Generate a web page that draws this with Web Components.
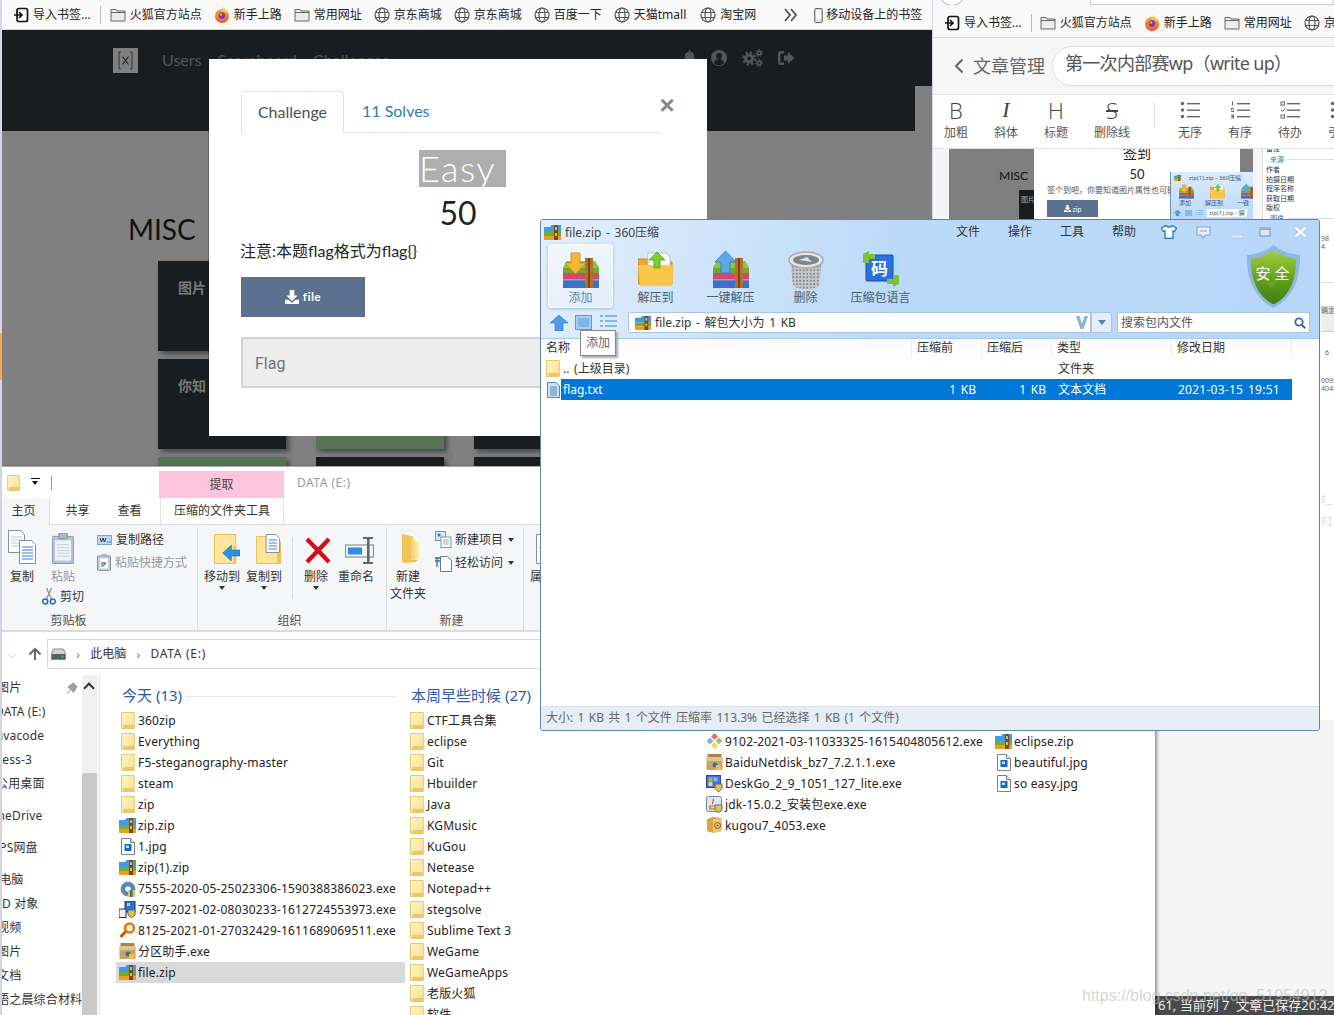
<!DOCTYPE html>
<html lang="zh">
<head>
<meta charset="utf-8">
<title>screenshot</title>
<style>
  html, body { margin: 0; padding: 0; }
  body {
    width: 1334px;
    height: 1015px;
    overflow: hidden;
    position: relative;
    background: #d9d4e6;
    font: 12px/16px "Noto Sans", "Noto Sans CJK SC", sans-serif;
    color: #222;
  }
  .orange { position: absolute; left: 0; top: 333px; width: 2px; height: 47px; background: #f7a65f; }
</style>
</head>
<body>
<div class="orange"></div>
<ctf-browser></ctf-browser>
<editor-window></editor-window>
<explorer-window></explorer-window>
<zip-window></zip-window>
<desk-mark></desk-mark>

<script>
const rarBooks = `<rect y="28" width="36" height="9" fill="#3f6fc7"/><rect y="28" width="36" height="1.5" fill="#7fa4e8"/><rect y="22" width="36" height="6" fill="#d8476a"/><path d="M4 10h28l4 7v5H0v-5z" fill="#6faa32"/><path d="M4 10h28l4 7H0z" fill="#8cc63f"/><rect x="22" y="7" width="8" height="30" fill="#b5702a"/><rect x="25" y="7" width="2" height="30" fill="#7c4514"/>`

const ICONS = {
  import: ['0 0 16 16', `<rect x="4" y="1.5" width="10.5" height="13" rx="2" fill="#fff" stroke="#111" stroke-width="1.7"/><path d="M1 8h7.5M6 5l3 3-3 3" fill="none" stroke="#111" stroke-width="1.7"/>`],
  bmfolder: ['0 0 16 16', `<path d="M1 2.5h5l1 1.5h8v10H1z" fill="#ececec" stroke="#666"/><path d="M1 5.5h14" stroke="#666"/>`],
  firefox: ['0 0 16 16', `<defs><radialGradient id="g" cx=".5" cy=".25" r=".85"><stop offset="0" stop-color="#ffc02e"/><stop offset=".6" stop-color="#ff7a1a"/><stop offset="1" stop-color="#e8245a"/></radialGradient></defs><circle cx="8" cy="9" r="7" fill="url(#g)"/><path d="M9 0c2 2 4 3 4.500 6L8 5z" fill="#ffcf3a"/><circle cx="8" cy="8.500" r="3.400" fill="#6b3fc8"/><circle cx="7" cy="7.500" r="1.300" fill="#f5a33a"/>`],
  globe: ['0 0 16 16', `<g fill="none" stroke="#555" stroke-width="1.2"><circle cx="8" cy="8" r="7"/><ellipse cx="8" cy="8" rx="3" ry="7"/><path d="M1.500 5.500h13M1.500 10.500h13"/></g>`],
  phone: ['0 0 9 15', `<rect x=".7" y=".5" width="7.600" height="14" rx="1.200" fill="#ddd" stroke="#666"/><rect x="2" y="2.500" width="5" height="9" fill="#fff"/>`],
  chevrons: ['0 0 14 14', `<path d="M1 1l5 6-5 6M7 1l5 6-5 6" fill="none" stroke="#555" stroke-width="1.800"/>`],
  logo: ['0 0 25 25', `<rect width="25" height="25" fill="#808080"/><path d="M8 4H6v17h2M17 4h2v17h-2" fill="none" stroke="#333"/><path d="M9.500 8.500l6 8M15.500 8.500l-6 8" stroke="#222" stroke-width="1.200"/>`],
  bell: ['0 0 14 16', `<path d="M7 0a1 1 0 011 1v1a4.500 4.500 0 014 4.500c0 3.500 1 4.500 2 5.500H0c1-1 2-2 2-5.500A4.500 4.500 0 016 2V1a1 1 0 011-1z" fill="#555"/><path d="M5 13.500h4a2 2 0 01-4 0z" fill="#555"/>`],
  usercircle: ['0 0 16 16', `<circle cx="8" cy="8" r="8" fill="#555"/><circle cx="8" cy="6" r="3" fill="#1a1d20"/><path d="M2.800 13c1-3 3-4 5.200-4s4.200 1 5.200 4a7 7 0 01-10.400 0z" fill="#1a1d20"/>`],
  cogs: ['0 0 22 18', `<g fill="none" stroke="#555"><circle cx="7.500" cy="9.500" r="3.500" stroke-width="3"/><circle cx="7.500" cy="9.500" r="6" stroke-width="2.400" stroke-dasharray="2.400 2.300"/><circle cx="18" cy="4" r="1.800" stroke-width="1.600"/><circle cx="18" cy="4" r="3.200" stroke-width="1.400" stroke-dasharray="1.500 1.300"/><circle cx="18" cy="14" r="1.800" stroke-width="1.600"/><circle cx="18" cy="14" r="3.200" stroke-width="1.400" stroke-dasharray="1.500 1.300"/></g>`],
  signout: ['0 0 17 14', `<path d="M6 1.200H2.500A1.300 1.300 0 001.200 2.500v9a1.300 1.300 0 001.300 1.300H6" fill="none" stroke="#555" stroke-width="2.400"/><path d="M6 4.500h4V1l6.500 6-6.500 6V9.500H6z" fill="#555"/>`],
  download: ['0 0 15 15', `<path d="M5 0h5v6h3.500L7.500 12 1.500 6H5z" fill="#fff"/><path d="M0 10.500h3.500l4 3.200 4-3.200H15V15H0z" fill="#fff"/>`],
  back: ['0 0 10 16', `<path d="M8.500 1.500L2 8l6.500 6.500" fill="none" stroke="#666" stroke-width="2"/>`],
  ul: ['0 0 20 18', `<g fill="#666"><circle cx="2.500" cy="2.500" r="1.700"/><circle cx="2.500" cy="9" r="1.700"/><circle cx="2.500" cy="15.500" r="1.700"/><rect x="7" y="2" width="13" height="1.400"/><rect x="7" y="8.500" width="13" height="1.400"/><rect x="7" y="15" width="13" height="1.400"/></g>`],
  ol: ['0 0 20 18', `<g fill="#666"><rect x="7" y="2" width="13" height="1.400"/><rect x="7" y="8.500" width="13" height="1.400"/><rect x="7" y="15" width="13" height="1.400"/><path d="M2 .5h1v4H2zM1 7h3v1H2v1h2v2H1v-1h2V9H1zM1 13.500h3v4H1v-1h2v-.5H1.500v-1H3V14.500H1z"/></g>`],
  todo: ['0 0 20 18', `<g fill="#666"><rect x="7" y="2" width="13" height="1.400"/><rect x="7" y="8.500" width="13" height="1.400"/><rect x="7" y="15" width="13" height="1.400"/></g><g fill="none" stroke="#666"><rect x="1" y="1" width="3.500" height="3"/><rect x="1" y="14" width="3.500" height="3"/><path d="M1 9l1.500 1.500 2.500-3"/></g>`],

  // file list
  folder: ['0 0 14 17', `<defs><linearGradient id="g" x1="0" y1="0" x2="1" y2="1"><stop offset="0" stop-color="#fff4c8"/><stop offset="1" stop-color="#fbe08c"/></linearGradient></defs><path d="M.5.5h12.800v13H3v3H.5z" fill="url(#g)" stroke="#e6c873"/><path d="M3 13.500v3h10.300v-3z" fill="#f0c95e" stroke="#e6c873"/>`],
  zip: ['0 0 17 15', `<path d="M0 2h6l1.500-2H17v7H0z" fill="#3f9be8"/><rect y="7" width="17" height="4" fill="#6fb02e"/><rect y="11" width="17" height="4" fill="#f39a1f"/><rect x="10" width="4" height="15" fill="#7c4a16"/><rect x="11" y="2" width="2" height="3" fill="#e8b45a"/><rect x="11" y="8" width="2" height="3" fill="#e8b45a"/>`],
  jpg: ['0 0 14 17', `<path d="M.5.500h9l4 4v12H.5z" fill="#fff" stroke="#77818c"/><path d="M9.500.500v4h4" fill="#eef" stroke="#77818c"/><rect x="3.500" y="6" width="7" height="7" fill="#1469c0"/><rect x="5" y="7.500" width="3" height="2.500" fill="#bfe3ff"/>`],
  txt: ['0 0 13 16', `<path d="M.5.5h8.500l3.500 3.500v11.500H.5z" fill="#cfe2f6" stroke="#4f86c0"/><path d="M3 5h7M3 7h7M3 9h7M3 11h7M3 13h7" stroke="#4f86c0"/>`],
  e7555: ['0 0 16 16', `<circle cx="8" cy="8" r="7.500" fill="#8b8b8b"/><circle cx="8" cy="8" r="5.500" fill="#2a8bd8"/><circle cx="8" cy="8" r="2.800" fill="#fff"/><rect x="8" y="9" width="7" height="7" rx="1" fill="#f2c22c"/><rect x="10" y="9" width="2.500" height="7" fill="#1f6fcf"/>`],
  e7597: ['0 0 17 17', `<rect x="6" y="0" width="10" height="11" fill="#2f6fd0" stroke="#234"/><rect x="8" y="2" width="3" height="3" fill="#9fd0ff"/><rect x="0" y="8" width="7" height="8.500" fill="#eee" stroke="#333"/><path d="M9 9h7v5l-3.500 3L9 14z" fill="#f2c22c" stroke="#2f6fd0"/>`],
  e8125: ['0 0 17 17', `<circle cx="10.500" cy="6" r="4.500" fill="#fff4e0" stroke="#e87511" stroke-width="2.600"/><path d="M6.800 9.500L1.500 15" stroke="#c85a08" stroke-width="3.200"/>`],
  boxe: ['0 0 17 17', `<rect x=".5" y="3" width="16" height="13" rx="1" fill="#c8a468"/><rect x=".5" y="3" width="16" height="4" fill="#e2c48e"/><rect x="1.500" y="0" width="14" height="3" fill="#a88650"/><circle cx="9" cy="11" r="2.500" fill="#2d6fb8"/><rect x="10" y="11" width="5" height="5" fill="#f2c22c"/>`],
  git: ['0 0 17 17', `<path d="M8.500 0l3.500 3.500-3.500 3.500L5 3.500z" fill="#ef6a6a"/><path d="M4 4.500L7.500 8 4 11.500.5 8z" fill="#7cb4ef"/><path d="M13 4.500L16.500 8 13 11.500 9.500 8z" fill="#8ed06f"/><path d="M8.500 9l3.500 3.500L8.500 16 5 12.500z" fill="#f6d65a"/>`],
  desk: ['0 0 17 17', `<rect x=".5" y=".5" width="14" height="12" fill="#4c6fd8" stroke="#2a46a0"/><rect x="2.500" y="2.500" width="4" height="4" fill="#7fd05a"/><rect x="7.500" y="2.500" width="4" height="4" fill="#7fb8ff"/><rect x="2.500" y="7" width="4" height="4" fill="#ffd24a"/><path d="M9 9h7v4.500L12.500 17 9 13.500z" fill="#f2c22c" stroke="#2f6fd0"/>`],
  jdk: ['0 0 17 17', `<rect x=".5" y=".5" width="15" height="15" rx="2" fill="#dfe6f0" stroke="#77818c"/><path d="M7 3c2 2-2 3 0 5M4 10h6v3H4z" fill="none" stroke="#d0541a" stroke-width="1.200"/><path d="M9 9h7v4.500L12.500 17 9 13.500z" fill="#f2c22c" stroke="#2f6fd0"/>`],
  kugou: ['0 0 17 17', `<path d="M1 2l6-2 9 1v13l-9 2-6-2z" fill="#d9a53f"/><path d="M7 2l9-1v13l-9 2z" fill="#e9c778"/><circle cx="11.500" cy="8.500" r="3" fill="none" stroke="#8b5a10"/><circle cx="11.500" cy="8.500" r="1" fill="#8b5a10"/>`],

  // ribbon
  copy: ['0 0 28 34', `<path d="M.5.500h12l4 4v18H.5z" fill="#fff" stroke="#8a8f96"/><path d="M3 7h11M3 10h11M3 13h11M3 16h11" stroke="#b8c8dc"/><path d="M11.500 10.500h12l4 4v19h-16z" fill="#fff" stroke="#8a8f96"/><path d="M14 17h11M14 20h11M14 23h11M14 26h11M14 29h11" stroke="#3d7fd0"/>`],
  paste: ['0 0 26 32', `<rect x=".5" y="3.500" width="25" height="28" rx="1" fill="#b6c4d8" stroke="#8492a8"/><rect x="3.500" y="7.500" width="19" height="21" fill="#eef2f8"/><path d="M6 12h14M6 15h14M6 18h14M6 21h14M6 24h14" stroke="#c4d0e0"/><rect x="8" y="0" width="10" height="6" rx="1" fill="#aeb8c6" stroke="#7d8797"/>`],
  copypath: ['0 0 15 10', `<rect x=".5" y=".5" width="14" height="9" fill="#bcd8f4" stroke="#7ca4cc"/><path d="M3 3l1.500 4L6 3l1.500 4L9 3M10.500 7h1M12.500 7h1" fill="none" stroke="#223" stroke-width=".9"/>`],
  pastelink: ['0 0 14 17', `<rect x=".5" y="2" width="13" height="14.500" rx="1" fill="#c2cede" stroke="#8492a8"/><rect x="3" y="4.500" width="8" height="10" fill="#fff"/><rect x="4" y="0" width="6" height="3" fill="#aeb8c6"/><path d="M5 13V9h4M9 9L6 12" fill="none" stroke="#6a7a92" stroke-width="1.300"/>`],
  scissors: ['0 0 14 17', `<path d="M9.500 0L4.500 11M4.500 0l5 11" stroke="#8b9096" stroke-width="1.300"/><g fill="none" stroke="#1b6fc4" stroke-width="1.500"><circle cx="3.200" cy="13.500" r="2.500"/><circle cx="10.800" cy="13.500" r="2.500"/></g>`],
  moveto: ['0 0 27 30', `<rect x=".5" y=".5" width="22" height="29" fill="#fde59b" stroke="#e8c255"/><rect x="20" y="12" width="3" height="17" fill="#f0c44f"/><path d="M9 19l9-8v5h9v6h-9v5z" fill="#2f8fe0" stroke="#1c6fc0" stroke-width=".6"/>`],
  copyto: ['0 0 27 30', `<path d="M.5 2.500h17V8h8v21.500H.5z" fill="#fde59b" stroke="#e8c255"/><rect x="22" y="12" width="3.500" height="17" fill="#f0c44f"/><path d="M10.500.500h10l4 4v14h-14z" fill="#fff" stroke="#8a8f96"/><path d="M13 6h9M13 9h9M13 12h9M13 15h9" stroke="#3d7fd0"/>`],
  del: ['0 0 26 27', `<path d="M2 2l22 23M24 2L2 25" stroke="#d80a14" stroke-width="4.200"/>`],
  rename: ['0 0 29 27', `<rect x=".5" y="8" width="28" height="12" fill="#f4f6f9" stroke="#8b8f96" stroke-width="1.200"/><rect x="3" y="10.500" width="14" height="7" fill="#2a8fe6"/><rect x="22" y="2" width="2.600" height="23" fill="#666"/><path d="M18 1h10M18 26h10" stroke="#666" stroke-width="2"/>`],
  newfolder: ['0 0 18 30', `<defs><linearGradient id="g" x1="0" y1="0" x2="1" y2="0"><stop offset="0" stop-color="#f3cf6e"/><stop offset="1" stop-color="#fdeeb4"/></linearGradient></defs><path d="M0 0l9 2v24l-9 3z" fill="#f0c455"/><path d="M9 2h2l1 4 5 2v17l-8 1z" fill="url(#g)"/><path d="M0 27l8-1h8l1-1-4 3-9 1z" fill="#ecc053"/>`],
  newitem: ['0 0 17 17', `<rect x=".5" y=".5" width="10" height="9" fill="#dbe8f8" stroke="#8090a8"/><rect x="2.500" y="2.500" width="3" height="3" fill="#3d7fd0"/><rect x="6" y="6" width="10" height="10.500" fill="#fff" stroke="#8090a8"/><path d="M8 9h6M8 11h6M8 13h6" stroke="#aaa"/>`],
  easy: ['0 0 17 19', `<path d="M5.500 3.500h7l4 4v11h-11z" fill="#fff" stroke="#778"/><path d="M0 5h6M0 8h5M2 5v9" stroke="#1b6fc4" stroke-width="1.300"/>`],
  prop: ['0 0 12 30', `<path d="M.5.500H12v29H.5z" fill="#fff" stroke="#8a8f96"/><path d="M3 14h7M3 18h7" stroke="#e89040"/>`],
  drive: ['0 0 15 12', `<path d="M2.500 1h10l2 4.500v6H.5v-6z" fill="#cfd2d6" stroke="#888"/><rect x="1" y="6" width="13" height="5" fill="#5a5d61"/><circle cx="11.500" cy="8.500" r="1" fill="#44d04a"/>`],
  pin: ['0 0 12 12', `<path d="M7 0l5 5-1.500.800-1 2.700L7 11 5 8 1 12 .5 11.500l3.500-4L1.500 5l2.500-2.500 2.300-1z" fill="#9aa0a6"/>`],
  up: ['0 0 14 14', `<path d="M7 13V2M1.500 7.500L7 2l5.500 5.500" fill="none" stroke="#666" stroke-width="2"/>`],

  // 360 zip window
  zadd: ['0 0 36 38', rarBooks + `<path d="M8 2h9v10h6L12.500 23 2 12h6z" fill="#f7b733" stroke="#c98a12" stroke-width=".8"/>`],
  zone: ['0 0 36 38', rarBooks + `<path d="M8 22V11H2L12.500 0 23 11h-6v11z" fill="#5da8ec" stroke="#2c78c4" stroke-width=".8"/>`],
  zext: ['0 0 36 36', `<path d="M0 8h10l2 3h22v22H0z" fill="#e8a92c" stroke="#c98a12"/><path d="M10 2h18l4 4v12H10z" fill="#fff" stroke="#bbb"/><path d="M0 14h34l2 2-2 19H2z" fill="#fbc74a"/><path d="M16 17V9h-5l8-8 8 8h-5v8z" fill="#7fcf2e" stroke="#4c9a12" stroke-width=".8"/>`],
  ztrash: ['0 0 36 38', `<defs><pattern id="m" width="3.500" height="3.500" patternUnits="userSpaceOnUse"><rect width="3.500" height="3.500" fill="#c4c6c8"/><rect x="1" y="1" width="1.500" height="1.500" fill="#6c7072"/></pattern></defs><path d="M2 9l3 26c5 4 21 4 26 0l3-26z" fill="url(#m)"/><ellipse cx="18" cy="9" rx="17" ry="8" fill="#e4e6e8" stroke="#a4a8aa" stroke-width="1.400"/><ellipse cx="18" cy="9" rx="13" ry="5" fill="#7f8486"/><path d="M11 9l8-3 5 5z" fill="#cfe3f4"/>`],
  zlang: ['0 0 36 36', `<rect x="8" y="5" width="27" height="26" fill="#a9dcf4"/><rect x="3" y="4" width="27" height="26" rx="1" fill="#2b6fe0" stroke="#1d4fb0"/><path d="M0 12V3l6-3v3h6v5H6v4z" fill="#7fc238"/><path d="M36 24v9l-6 3v-3h-6v-5h6v-4z" fill="#7fc238"/><text x="16.500" y="24" text-anchor="middle" font-size="17" font-weight="700" fill="#fff" font-family="Noto Sans CJK SC">码</text>`],
  zup: ['0 0 18 16', `<path d="M9 0l9 8h-5v8H5V8H0z" fill="#4f9be6" stroke="#2b74c4" stroke-width=".6"/>`],
  zview1: ['0 0 17 15', `<rect x=".5" y=".5" width="16" height="14" fill="#a8cff2" stroke="#5a9ad8"/><rect x="3" y="3" width="11" height="9" fill="#7cb6ea"/>`],
  zview2: ['0 0 17 15', `<g fill="#7cb6ea"><rect width="3" height="2"/><rect x="5" width="12" height="2"/><rect y="5" width="3" height="2"/><rect x="5" y="5" width="12" height="2"/><rect y="10" width="3" height="2"/><rect x="5" y="10" width="12" height="2"/></g>`],
  zv: ['0 0 12 13', `<path d="M0 0h3.500L6 8 8.500 0H12L7.500 13h-3z" fill="#8fb2d4"/>`],
  zsearch: ['0 0 12 12', `<circle cx="5" cy="5" r="3.700" fill="none" stroke="#2d6ea8" stroke-width="1.800"/><path d="M7.800 7.800L11.200 11.200" stroke="#2d6ea8" stroke-width="2"/>`],
  zshirt: ['0 0 16 14', `<path d="M5 .5L.5 3l2 3.500L4 6v7.500h8V6l1.500.5 2-3.500L11 .5C10.500 2.500 5.500 2.500 5 .5z" fill="#fff" stroke="#1e78c8" stroke-width="1.300"/>`],
  zmsg: ['0 0 15 13', `<path d="M1 1h13v8H9l-2 3-2-3H1z" fill="#e6f0fa" stroke="#8aa8c4" stroke-width="1.200"/><path d="M4 5h7" stroke="#8aa8c4"/>`],
  zmin: ['0 0 12 3', `<rect width="12" height="3" fill="#e8f2fc" stroke="#8aa8c4" stroke-width=".6"/>`],
  zmax: ['0 0 12 10', `<rect x="1" y="1" width="10" height="8" fill="#dce9f7" stroke="#8aa8c4" stroke-width="1.400"/><path d="M1 2.500h10" stroke="#8aa8c4"/>`],
  zclose: ['0 0 13 12', `<path d="M1.500 1.500l10 9M11.500 1.500l-10 9" stroke="#a9c0d6" stroke-width="3.800"/><path d="M1.500 1.500l10 9M11.500 1.500l-10 9" stroke="#f4f8fd" stroke-width="2.600"/>`],
  shield: ['0 0 53 63', `<defs><linearGradient id="g" x1="0" y1="0" x2="0" y2="1"><stop offset="0" stop-color="#a2d03c"/><stop offset=".6" stop-color="#5d9a1c"/><stop offset="1" stop-color="#3f7e12"/></linearGradient></defs><path d="M26.500 0C34 6 43 9 53 10c1 24-8 44-26.500 53C8 54-1 34 0 10 10 9 19 6 26.500 0z" fill="#8fb8e0"/><path d="M26.500 5C33 10 41 13 49 14c.5 21-7 38-22.500 45.500C11 52 3.500 35 4 14c8-1 16-4 22.500-9z" fill="url(#g)"/><path d="M14 32l10 11 16-19-16 13z" fill="#6aa528"/>`],
}

class AppIcon extends HTMLElement {
  constructor() {
    super()
    const icon = ICONS[this.getAttribute('name')]
    const v = icon[0].split(' ')
    const w = this.getAttribute('w') || v[2]
    const h = this.getAttribute('h') || v[3]
    this.attachShadow({ mode: 'open' }).innerHTML = `
      <style>:host { display: inline-flex; flex: none; width: ${w}px; height: ${h}px; } svg { display: block; }</style>
      <svg width="${w}" height="${h}" viewBox="${icon[0]}" preserveAspectRatio="none">${icon[1]}</svg>`
  }
}

// one bookmark in the firefox bar
class BmItem extends HTMLElement {
  constructor() {
    super()
    const w = this.getAttribute('icon') === 'phone' ? 9 : 16
    const h = this.getAttribute('icon') === 'phone' ? 15 : 16
    this.attachShadow({ mode: 'open' }).innerHTML = `
      <style>
        :host { display: inline-flex; align-items: center; gap: 4px; height: 16px; color: #222; font-size: 12px; line-height: 16px; white-space: nowrap; flex: none; }
      </style>
      <app-icon name="${this.getAttribute('icon')}" w="${w}" h="${h}"></app-icon><slot></slot>`
  }
}

class BookmarkBar extends HTMLElement {
  constructor() {
    super()
    this.attachShadow({ mode: 'open' }).innerHTML = `
      <style>
        :host { display: flex; align-items: center; gap: 12px; background: #f9f9fa; border-bottom: 1px solid #d8d8da; box-sizing: border-box; overflow: hidden; padding: 1px 0 0 11px; }
        ::slotted(.sep) { width: 1px; height: 18px; background: #bbb; margin: 0 -3px 0 -3px; flex: none; }
      </style>
      <slot></slot>`
  }
}

class CtfCard extends HTMLElement {
  constructor() {
    super()
    this.attachShadow({ mode: 'open' }).innerHTML = `
      <style>
        :host { display: block; height: 90px; background: #1a1d20; box-shadow: 3px 3px 5px rgba(0,0,0,.45); color: #777; font-weight: 700; font-size: 14px; line-height: 20px; padding: 17px 0 0 20px; box-sizing: border-box; }
        :host([green]) { background: #577455; }
      </style>
      <slot></slot>`
  }
}

class CtfModal extends HTMLElement {
  constructor() {
    super()
    this.attachShadow({ mode: 'open' }).innerHTML = `
      <style>
        :host { position: absolute; left: 207px; top: 59px; width: 498px; height: 377px; background: #fff; box-sizing: border-box; padding: 32px 32px 0; color: #212529; font-family: Lato, "Noto Sans CJK SC", sans-serif; box-shadow: -1px 0 0 rgba(0,0,0,.2); }
        .close { position: absolute; left: 448px; top: 32px; width: 20px; line-height: 28px; font-size: 26px; text-align: center; color: #888; font-weight: 700; font-family: "Liberation Sans", sans-serif; }
        .tabs { display: flex; height: 41px; margin-right: 14px; border-bottom: 1px solid #dee2e6; box-sizing: content-box; font-size: 16px; line-height: 40px; }
        .tab { width: 103px; border: 1px solid #dee2e6; border-bottom: 0; border-radius: 4px 4px 0 0; background: #fff; box-sizing: border-box; text-align: center; color: #495057; margin-bottom: -1px; height: 42px; }
        .solves { color: #337ab7; margin-left: 18px; }
        .head { text-align: center; margin-top: 17px; }
        .easy { display: inline-block; margin-left: 9px; width: 87px; height: 37px; line-height: 36px; text-align: left; background: #aeaeae; color: #fff; font-size: 36px; font-weight: 300; letter-spacing: 1.500px; white-space: pre; }
        .pts { font-size: 32px; line-height: 36px; margin-top: 8px; font-weight: 400; }
        .desc { margin: 8px 0 0 -1px; font-size: 16px; line-height: 24px; }
        .file { display: flex; align-items: center; justify-content: center; gap: 4px; width: 124px; height: 40px; background: #5c718f; color: #fff; font-weight: 700; font-size: 12px; margin: 14px 0 0; letter-spacing: .4px; }
        .flag { margin: 20px 0 0; width: 440px; height: 51px; background: #eee; border: 2px solid #d3d3d7; box-sizing: border-box; padding-left: 12px; font: 16px/49px Roboto, sans-serif; color: #6c757d; }
      </style>
      <div class="close">×</div>
      <div class="tabs"><div class="tab">Challenge</div><div class="solves">11 Solves</div></div>
      <div class="head"><span class="easy">Easy</span><div class="pts">50</div></div>
      <div class="desc">注意:本题flag格式为flag{}</div>
      <div class="file"><app-icon name="download" w="14" h="14"></app-icon>file</div>
      <div class="flag">Flag</div>`
  }
}

// the CTF site behind the modal
class CtfBrowser extends HTMLElement {
  constructor() {
    super()
    this.attachShadow({ mode: 'open' }).innerHTML = `
      <style>
        :host { position: absolute; left: 2px; top: 0; width: 930px; height: 467px; display: flex; flex-direction: column; background: #808080; overflow: hidden; font-family: Lato, "Noto Sans CJK SC", sans-serif; }
        bookmark-bar { height: 30px; flex: none; font-family: "Noto Sans", "Noto Sans CJK SC", sans-serif; }
        .top { display: flex; height: 101px; flex: none; }
        nav { flex: 1; background: #1a1d20; display: flex; align-items: flex-start; padding: 18px 120px 0 111px; color: #555; font-size: 16px; line-height: 24px; }
        nav .links { display: flex; gap: 16px; margin-left: 24px; }
        .fa { margin-left: auto; display: flex; align-items: center; gap: 15px; height: 20px; }
        .side { width: 17px; height: 56px; background: #1a1d20; }
        .body { flex: 1; position: relative; padding: 81px 0 0 126px; }
        h2 { margin: 0; font-size: 28px; line-height: 34px; font-weight: 400; color: #111; }
        .grid { display: grid; grid-template-columns: repeat(3, 128px); gap: 8px 30px; margin: 15px 0 0 30px; }
        .shade { position: absolute; left: 0; right: 0; bottom: 0; height: 6px; background: linear-gradient(rgba(0,0,0,0), rgba(0,0,0,.4)); }
      </style>
      <bookmark-bar>
        <bm-item icon="import">导入书签...</bm-item><span class="sep"></span>
        <bm-item icon="bmfolder">火狐官方站点</bm-item>
        <bm-item icon="firefox">新手上路</bm-item>
        <bm-item icon="bmfolder">常用网址</bm-item>
        <bm-item icon="globe">京东商城</bm-item>
        <bm-item icon="globe">京东商城</bm-item>
        <bm-item icon="globe">百度一下</bm-item>
        <bm-item icon="globe" style="margin-right:2px">天猫tmall</bm-item>
        <bm-item icon="globe">淘宝网</bm-item>
        <app-icon name="chevrons" style="margin-left:16px"></app-icon>
        <bm-item icon="phone" style="margin-left:4px;gap:3px">移动设备上的书签</bm-item>
      </bookmark-bar>
      <div class="top">
        <nav>
          <app-icon name="logo"></app-icon>
          <div class="links"><span>Users</span><span>Scoreboard</span><span>Challenges</span></div>
          <div class="fa">
            <app-icon name="bell" w="13" h="16"></app-icon>
            <app-icon name="usercircle"></app-icon>
            <app-icon name="cogs" w="21" h="18"></app-icon>
            <app-icon name="signout"></app-icon>
          </div>
        </nav>
        <div class="side"></div>
      </div>
      <div class="body">
        <h2>MISC</h2>
        <div class="grid">
          <ctf-card>图片</ctf-card><ctf-card></ctf-card><ctf-card></ctf-card>
          <ctf-card>你知</ctf-card><ctf-card green></ctf-card><ctf-card></ctf-card>
          <ctf-card green></ctf-card><ctf-card></ctf-card><ctf-card></ctf-card>
        </div>
        <div class="shade"></div>
      </div>
      <ctf-modal></ctf-modal>`
  }
}

class ToolBtn extends HTMLElement {
  constructor() {
    super()
    this.attachShadow({ mode: 'open' }).innerHTML = `
      <style>
        :host { display: flex; flex-direction: column; align-items: center; flex: none; width: var(--w, 50px); color: #555; font-size: 12px; line-height: 16px; white-space: nowrap; }
        .g { height: 24px; display: flex; align-items: center; justify-content: center; margin-bottom: 3px; font: 300 22px/24px "Open Sans", sans-serif; color: #444; }
        :host([it]) .g { font-family: "Liberation Serif", serif; font-style: italic; font-weight: 400; }
        :host([st]) .g { text-decoration: line-through; text-decoration-thickness: 1.500px; }
      </style>
      <div class="g"><slot name="g"></slot></div><slot></slot>`
  }
}

// markdown editor window on the right, mostly covered
class EditorWindow extends HTMLElement {
  constructor() {
    super()
    this.attachShadow({ mode: 'open' }).innerHTML = `
      <style>
        :host { position: absolute; left: 933px; top: 0; width: 401px; height: 1015px; display: flex; flex-direction: column; background: #f5f5f5; overflow: hidden; font-family: "Noto Sans", "Noto Sans CJK SC", sans-serif; }
        .stub { height: 5px; background: #f9f9fa; flex: none; position: relative; overflow: hidden; }
        .stub i { position: absolute; left: 157px; top: -1px; right: 0; height: 4px; border: 1px solid #ccc; background: #fff; }
        .stub b { position: absolute; left: 6px; top: -20px; width: 24px; height: 24px; border: 1px solid #aaa; border-radius: 50%; background: #fff; }
        bookmark-bar { height: 33px; flex: none; padding: 3px 0 0 11px; }
        .head { height: 57px; flex: none; display: flex; align-items: center; background: #f6f6f7; border-bottom: 1px solid #e6e6e6; padding-left: 21px; box-sizing: border-box; font-size: 18px; color: #666; }
        .head span.t { margin: 0 7px 0 9px; line-height: 24px; }
        .pill { flex: 1; margin-right: -30px; height: 40px; border: 1px solid #ddd; border-radius: 20px; background: #fff; padding-left: 12px; font-size: 18px; line-height: 32px; color: #555; box-sizing: border-box; letter-spacing: -.7px; white-space: nowrap; }
        .tools { height: 54px; flex: none; display: flex; align-items: flex-start; padding-top: 3px; margin-left: -2px; background: #fff; border-bottom: 1px solid #e2e2e2; box-sizing: border-box; overflow: hidden; }
        .vsep { width: 1px; height: 26px; background: #e0e0e0; margin: 4px 10px 0 11px; flex: none; }
        .page { flex: 1; display: flex; align-items: flex-start; padding-left: 16px; overflow: hidden; }
        .mini { width: 304px; height: 71px; background: #7f7f7f; display: flex; overflow: hidden; position: relative; flex: none; }
        .misc { width: 85px; padding: 19px 0 0 50px; box-sizing: border-box; font: 12px/16px Lato, sans-serif; color: #111; }
        .tiny { position: absolute; left: 70px; top: 41px; width: 15px; height: 30px; background: #1a1d20; color: #aaa; font-size: 7px; line-height: 20px; overflow: hidden; white-space: nowrap; padding-left: 2px; box-sizing: border-box; }
        .mm { width: 206px; background: #fff; flex: none; position: relative; text-align: center; overflow: hidden; color: #222; font-family: Lato, "Noto Sans CJK SC", sans-serif; }
        .mm .a { font-size: 14px; line-height: 16px; margin-top: -4px; }
        .mm .b { font-size: 13px; line-height: 16px; margin-top: 5px; }
        .mm .c { font-size: 8px; line-height: 12px; color: #555; text-align: left; padding-left: 13px; margin-top: 2px; white-space: nowrap; }
        .mm .d { margin: 4px 0 0 13px; width: 51px; height: 17px; background: #5c718f; color: #fff; font-size: 7px; display: flex; align-items: center; justify-content: center; gap: 2px; }
        .mz { position: absolute; left: 221px; top: 23px; width: 83px; height: 48px; background: linear-gradient(#dcecfb, #b9d8f8); font-size: 6px; line-height: 8px; color: #456; overflow: hidden; border-left: 1px solid #6c8ebf; box-sizing: border-box; }
        .mz .r { display: flex; gap: 8px; padding: 2px 3px; white-space: nowrap; align-items: center; }
        .mz .lb { display: flex; gap: 14px; padding-left: 8px; white-space: nowrap; }
        .mz .ad { display: flex; gap: 4px; align-items: center; padding: 2px 3px; white-space: nowrap; }
        .mz .ad span { background: #fff; padding: 0 2px; }
        .gap { width: 9px; flex: none; }
        .doc { width: 72px; flex: none; height: 571px; background: #fff; border-left: 1px solid #ddd; padding: 0 0 0 3px; box-sizing: border-box; position: relative; overflow: hidden; font-size: 7px; line-height: 9.500px; color: #333; white-space: nowrap; }
        .doc .in { margin-top: -5px; }
        .doc .s { color: #3a78c8; margin: 1px 0 1px 4px; display: flex; align-items: center; gap: 3px; }
        .doc .s::after { content: ""; width: 60px; height: 1px; background: #cfe0f2; }
        .tail { position: absolute; left: 58px; top: 0; width: 20px; color: #666; font-size: 7px; line-height: 8px; }
        .tail i { position: absolute; left: 0; width: 20px; font-style: normal; }
        .tail .ln { height: 1px; background: #ddd; }
        .tail .bx { height: 24px; background: #eee; border-top: 1px solid #ccc; border-bottom: 1px solid #ccc; }
        .tail .fx { font-size: 13px; color: #ddd; line-height: 14px; }
        .status { position: absolute; left: 222px; bottom: 0; right: 0; height: 19px; background: #4a4a4a; color: #eee; font-size: 13px; line-height: 19px; white-space: nowrap; overflow: hidden; padding-left: 3px; }
      </style>
      <div class="stub"><b></b><i></i></div>
      <bookmark-bar>
        <bm-item icon="import">导入书签...</bm-item><span class="sep" style="margin:0 -4px 0 -3px"></span>
        <bm-item icon="bmfolder">火狐官方站点</bm-item>
        <bm-item icon="firefox">新手上路</bm-item>
        <bm-item icon="bmfolder">常用网址</bm-item>
        <bm-item icon="globe">京东商城</bm-item>
      </bookmark-bar>
      <div class="head"><app-icon name="back"></app-icon><span class="t">文章管理</span><div class="pill">第一次内部赛wp（write up）</div></div>
      <div class="tools">
        <tool-btn><span slot="g">B</span>加粗</tool-btn>
        <tool-btn it><span slot="g">I</span>斜体</tool-btn>
        <tool-btn><span slot="g">H</span>标题</tool-btn>
        <tool-btn st style="--w:62px"><span slot="g">S</span>删除线</tool-btn>
        <div class="vsep"></div>
        <tool-btn><app-icon slot="g" name="ul"></app-icon>无序</tool-btn>
        <tool-btn><app-icon slot="g" name="ol"></app-icon>有序</tool-btn>
        <tool-btn><app-icon slot="g" name="todo"></app-icon>待办</tool-btn>
        <tool-btn><app-icon slot="g" name="ul"></app-icon>引用</tool-btn>
      </div>
      <div class="page">
        <div class="mini">
          <div class="misc">MISC</div>
          <div class="tiny">图片</div>
          <div class="mm">
            <div class="a">签到</div><div class="b">50</div>
            <div class="c">签个到吧，你要知道图片属性也可能有信息</div>
            <div class="d"><app-icon name="download" w="7" h="7"></app-icon>zip</div>
          </div>
          <div class="mz">
            <div class="r"><app-icon name="zip" w="7" h="6"></app-icon>zip(1).zip - 360压缩</div>
            <div class="r" style="padding:0 0 0 8px;gap:16px"><app-icon name="zadd" w="15" h="15"></app-icon><app-icon name="zext" w="15" h="15"></app-icon><app-icon name="zone" w="15" h="15"></app-icon></div>
            <div class="lb">添加<span>解压到</span><span>一键</span></div>
            <div class="ad"><app-icon name="zup" w="7" h="6"></app-icon><app-icon name="zview1" w="7" h="6"></app-icon><app-icon name="zview2" w="7" h="6"></app-icon><span>zip(1).zip - 解</span></div>
          </div>
        </div>
        <div class="gap"></div>
        <div class="doc">
          <div class="in">备注<div class="s">来源</div>作者<br>拍摄日期<br>程序名称<br>获取日期<br>版权<div class="s">图像</div></div>
          <div class="tail">
            <i style="top:86px">98</i><i style="top:94px">4</i>
            <i class="ln" style="top:133px"></i>
            <i class="bx" style="top:157px">确定</i>
            <i style="top:200px;left:4px">6</i>
            <i style="top:228px">00950</i><i style="top:236px">40480</i>
            <i class="fx" style="top:342px">t_</i><i class="fx" style="top:365px">FI</i>
          </div>
        </div>
      </div>
      <div class="status">61, 当前列 7&nbsp;&nbsp;文章已保存20:42:43</div>`
  }
}

class FileItem extends HTMLElement {
  constructor() {
    super()
    this.attachShadow({ mode: 'open' }).innerHTML = `
      <style>
        :host { display: flex; align-items: center; gap: 2px; height: 21px; padding-left: 3px; box-sizing: border-box; white-space: nowrap; font-size: 12px; line-height: 21px; color: #222; letter-spacing: .18px; }
        :host([sel]) { background: #d9d9d9; }
        span.i { width: 17px; height: 21px; display: flex; align-items: center; justify-content: center; flex: none; }
      </style>
      <span class="i"><app-icon name="${this.getAttribute('icon') || 'folder'}"></app-icon></span><slot></slot>`
  }
}

class RbLarge extends HTMLElement {
  constructor() {
    super()
    this.attachShadow({ mode: 'open' }).innerHTML = `
      <style>
        :host { display: flex; flex-direction: column; align-items: center; flex: none; width: var(--w, 36px); font-size: 12px; line-height: 17px; color: #333; white-space: nowrap; text-align: center; }
        :host([dim]) { color: #999; }
        .g { height: 34px; display: flex; align-items: flex-end; justify-content: center; margin-bottom: 4px; }
        .arr { width: 0; height: 0; border: 3px solid transparent; border-top: 4px solid #333; border-bottom: 0; margin-top: 1px; }
      </style>
      <div class="g"><slot name="g"></slot></div><slot></slot>${this.hasAttribute('menu') ? '<div class="arr"></div>' : ''}`
  }
}

class RbSmall extends HTMLElement {
  constructor() {
    super()
    this.attachShadow({ mode: 'open' }).innerHTML = `
      <style>
        :host { display: flex; align-items: center; gap: 4px; height: 23px; font-size: 12px; color: #333; white-space: nowrap; }
        :host([dim]) { color: #999; }
        .arr { width: 0; height: 0; border: 3px solid transparent; border-top: 4px solid #333; border-bottom: 0; margin-left: 2px; }
      </style>
      <slot></slot>${this.hasAttribute('menu') ? '<div class="arr"></div>' : ''}`
  }
}

class RbGroup extends HTMLElement {
  constructor() {
    super()
    this.attachShadow({ mode: 'open' }).innerHTML = `
      <style>
        :host { display: flex; flex-direction: column; width: var(--gw); flex: none; height: 104px; border-right: 1px solid #dcdddf; box-sizing: border-box; margin-top: 2px; }
        .b { flex: 1; display: flex; align-items: flex-start; padding-top: 3px; padding-left: var(--pl, 0); overflow: hidden; }
        .l { height: 16px; line-height: 16px; text-align: center; color: #555; font-size: 12px; margin-bottom: 2px; padding-right: var(--lr, 0); }
      </style>
      <div class="b"><slot></slot></div><div class="l">${this.getAttribute('label') || ''}</div>`
  }
}

// explorer showing DATA (E:)
class ExplorerWindow extends HTMLElement {
  constructor() {
    super()
    const col1 = [['folder','360zip'],['folder','Everything'],['folder','F5-steganography-master'],['folder','steam'],['folder','zip'],['zip','zip.zip'],['jpg','1.jpg'],['zip','zip(1).zip'],['e7555','7555-2020-05-25023306-1590388386023.exe'],['e7597','7597-2021-02-08030233-1612724553973.exe'],['e8125','8125-2021-01-27032429-1611689069511.exe'],['boxe','分区助手.exe'],['zip','file.zip']]
    const col2 = ['CTF工具合集','eclipse','Git','Hbuilder','Java','KGMusic','KuGou','Netease','Notepad++','stegsolve','Sublime Text 3','WeGame','WeGameApps','老版火狐','软件']
    const col3 = [['git','9102-2021-03-11033325-1615404805612.exe'],['boxe','BaiduNetdisk_bz7_7.2.1.1.exe'],['desk','DeskGo_2_9_1051_127_lite.exe'],['jdk','jdk-15.0.2_安装包exe.exe'],['kugou','kugou7_4053.exe']]
    const col4 = [['zip','eclipse.zip'],['jpg','beautiful.jpg'],['jpg','so easy.jpg']]
    const rows = list => list.map(([ic, t]) => `<file-item icon="${ic}"${t === 'file.zip' ? ' sel' : ''}>${t}</file-item>`).join('')
    const nav = [['图片',-5,0,1],['DATA (E:)',-7],['Javacode',-9],['Chess-3',-15],['公用桌面',-6],['OneDrive',-14,1],['WPS网盘',-14,1],['此电脑',-15,1],['3D 对象',-7],['视频',-5],['图片',-5],['文档',-5],['英语之晨综合材料目录',-17]]
    this.attachShadow({ mode: 'open' }).innerHTML = `
      <style>
        :host { position: absolute; left: 2px; top: 467px; width: 1153px; height: 548px; background: #fff; display: flex; flex-direction: column; overflow: hidden; box-shadow: 0 -1px 0 #aaa, 2px 0 3px rgba(0,0,0,.4); color: #333; font-family: "Noto Sans", "Noto Sans CJK SC", sans-serif; font-size: 12px; }
        .title { height: 31px; flex: none; display: flex; align-items: flex-end; }
        .qa { width: 157px; display: flex; align-items: center; align-self: center; padding-left: 5px; box-sizing: border-box; gap: 8px; }
        .qa .dn { width: 9px; height: 8px; border-top: 1px solid #111; position: relative; margin-left: 3px; }
        .qa .dn::after { content: ""; position: absolute; left: 1px; top: 2px; border: 3.500px solid transparent; border-top: 4px solid #111; border-bottom: 0; }
        .qa .s { width: 1px; height: 14px; background: #999; margin-left: 3px; }
        .pink { width: 125px; height: 27px; background: #ffc4dd; text-align: center; line-height: 27px; color: #444; }
        .dt { align-self: center; margin-left: 13px; color: #999; letter-spacing: .5px; }
        .tabs { height: 26px; flex: none; display: flex; line-height: 25px; border-bottom: 1px solid #dadbdc; box-sizing: content-box; }
        .tabs div { text-align: center; }
        .home { width: 48px; background: #f5f6f7; border-right: 1px solid #dadbdc; margin-bottom: -1px; height: 27px; box-sizing: border-box; padding-right: 4px; }
        .tabs .t2 { width: 53px; }
        .tabs .tool { width: 124px; border: 1px solid #e2e2e4; border-width: 0 1px; margin-left: 4px; box-sizing: border-box; }
        .ribbon { height: 107px; flex: none; display: flex; background: #f5f6f7; border-bottom: 2px solid #dcdcdc; box-sizing: border-box; overflow: hidden; }
        .col { display: flex; flex-direction: column; align-items: flex-start; }
        .col.up { margin-top: -2px; }
        .addr { height: 43px; flex: none; display: flex; align-items: center; padding-left: 6px; }
        .chev { font-size: 11px; color: #bbb; width: 20px; }
        .box { flex: 1; margin: 0 5px 0 5px; height: 30px; border: 1px solid #d9d9d9; display: flex; align-items: center; box-sizing: border-box; padding-left: 3px; letter-spacing: .1px; }
        .box b { font-weight: 400; color: #888; margin: 0 10px; font-size: 13px; line-height: 14px; }
        .box span { letter-spacing: .7px; }
        .main { flex: 1; display: flex; overflow: hidden; }
        .nav { width: 80px; flex: none; overflow: hidden; position: relative; padding-top: 1px; box-sizing: border-box; letter-spacing: .15px; }
        .nv { height: 24px; line-height: 24px; white-space: nowrap; color: #333; display: flex; align-items: center; }
        .nv.g { margin-top: 8px; }
        .nv app-icon { position: absolute; left: 64px; top: 7px; }
        .sb { width: 15px; flex: none; background: #f0f0f0; position: relative; }
        .sb::before { content: ""; position: absolute; left: 3px; top: 9px; width: 6px; height: 6px; border: solid #333; border-width: 2px 0 0 2px; transform: rotate(45deg); }
        .sb i { position: absolute; left: 0; right: 0; top: 98px; bottom: 0; background: #c9c9c9; }
        .div { width: 3px; background: #f7f7f7; border-right: 1px solid #e6e6e6; flex: none; box-sizing: border-box; }
        .files { flex: 1; display: flex; padding-left: 16px; overflow: hidden; }
        .fc { flex: none; display: flex; flex-direction: column; }
        .hd { height: 35px; flex: none; box-sizing: border-box; padding: 5px 0 0 6px; font-size: 15px; line-height: 24px; color: #2a5ca8; display: flex; align-items: center; gap: 4px; white-space: nowrap; }
        .hd::after { content: ""; height: 1px; flex: 1; background: #e6e6e6; margin: 2px 8px 0 0; }
        .hd.no::after { display: none; }
        .sp { height: 56px; flex: none; }
      </style>
      <div class="title">
        <div class="qa"><app-icon name="folder" w="13" h="16"></app-icon><span class="dn"></span><span class="s"></span></div>
        <div class="pink">提取</div>
        <div class="dt">DATA (E:)</div>
      </div>
      <div class="tabs">
        <div class="home">主页</div>
        <div class="t2" style="margin-left:1px">共享</div><div class="t2" style="margin-left:-1px">查看</div>
        <div class="tool">压缩的文件夹工具</div>
      </div>
      <div class="ribbon">
        <rb-group label="剪贴板" style="--gw:196px;--pl:4px;--lr:62px">
          <rb-large style="--w:32px"><app-icon slot="g" name="copy"></app-icon>复制</rb-large>
          <div class="col" style="margin-left:3px;width:44px;align-items:center">
            <rb-large dim style="--w:36px"><app-icon slot="g" name="paste" w="22" h="31"></app-icon>粘贴</rb-large>
            <rb-small><app-icon name="scissors"></app-icon>剪切</rb-small>
          </div>
          <div class="col up" style="margin-left:12px">
            <rb-small><app-icon name="copypath"></app-icon>复制路径</rb-small>
            <rb-small dim><app-icon name="pastelink"></app-icon>粘贴快捷方式</rb-small>
          </div>
        </rb-group>
        <rb-group label="组织" style="--gw:189px;--pl:6px;--lr:5px">
          <rb-large menu><app-icon slot="g" name="moveto" w="26" h="30" style="margin-left:10px"></app-icon>移动到</rb-large>
          <rb-large menu style="margin-left:6px"><app-icon slot="g" name="copyto" w="26" h="30" style="margin-left:10px"></app-icon>复制到</rb-large>
          <div style="width:1px;height:60px;background:#dcdddf;margin:8px 11px 0 10px;flex:none"></div>
          <rb-large menu style="--w:24px"><app-icon slot="g" name="del" style="margin-left:3px"></app-icon>删除</rb-large>
          <rb-large style="margin-left:10px"><app-icon slot="g" name="rename" style="margin-left:6px"></app-icon>重命名</rb-large>
        </rb-group>
        <rb-group label="新建" style="--gw:137px;--pl:3px;--lr:7px">
          <rb-large style="--w:36px"><app-icon slot="g" name="newfolder" style="margin-left:5px"></app-icon>新建<br>文件夹</rb-large>
          <div class="col up" style="margin-left:9px">
            <rb-small menu style="gap:3px"><app-icon name="newitem"></app-icon>新建项目</rb-small>
            <rb-small menu style="gap:3px"><app-icon name="easy"></app-icon>轻松访问</rb-small>
          </div>
        </rb-group>
        <rb-group style="--gw:100px;--pl:12px;border:0"><rb-large style="--w:12px"><app-icon slot="g" name="prop"></app-icon>属性</rb-large></rb-group>
      </div>
      <div class="addr">
        <span class="chev">⌵</span><app-icon name="up"></app-icon>
        <div class="box"><app-icon name="drive"></app-icon><b>›</b>此电脑<b>›</b><span>DATA (E:)</span></div>
      </div>
      <div class="main">
        <div class="nav">
          ${nav.map(([t, off, g, pin]) => `<div class="nv${g ? ' g' : ''}"><span style="margin-left:${off}px">${t}</span>${pin ? '<app-icon name="pin"></app-icon>' : ''}</div>`).join('')}
        </div>
        <div class="sb"><i></i></div>
        <div class="div"></div>
        <div class="files">
          <div class="fc" style="width:289px"><div class="hd">今天 (13)</div>${rows(col1)}</div>
          <div class="fc" style="width:298px"><div class="hd no">本周早些时候 (27)</div>${rows(col2.map(t => ['folder', t]))}</div>
          <div class="fc" style="width:289px"><div class="sp"></div>${rows(col3)}</div>
          <div class="fc"><div class="sp"></div>${rows(col4)}</div>
        </div>
      </div>`
  }
}

class ZipBtn extends HTMLElement {
  constructor() {
    super()
    this.attachShadow({ mode: 'open' }).innerHTML = `
      <style>
        :host { display: flex; flex-direction: column; align-items: center; flex: none; width: 75px; height: 64px; box-sizing: border-box; padding-top: 7px; color: #4a5c70; font-size: 12px; line-height: 16px; white-space: nowrap; }
        :host([on]) { width: 65px; background: linear-gradient(rgba(255,255,255,.55), rgba(255,255,255,.2)); border: 1px solid rgba(255,255,255,.7); border-radius: 4px; box-shadow: 0 1px 3px rgba(90,130,180,.5); color: #5f87ad; padding-top: 6px; }
        .g { height: 36px; margin-bottom: 3px; }
      </style>
      <div class="g"><slot name="g"></slot></div><slot></slot>`
  }
}

// 360 zip window, on top of everything
class ZipWindow extends HTMLElement {
  constructor() {
    super()
    this.attachShadow({ mode: 'open' }).innerHTML = `
      <style>
        :host { position: absolute; left: 540px; top: 219px; width: 780px; height: 512px; border: 1px solid #5f83aa; border-radius: 3px; box-sizing: border-box; background: #fff; display: flex; flex-direction: column; overflow: hidden; font-family: "Noto Sans", "Noto Sans CJK SC", sans-serif; font-size: 12px; color: #333; word-spacing: 1.500px; }
        .top { height: 118px; flex: none; background: linear-gradient(100deg, #e2effc, #bcdaf8 45%, #b8d7f8); border-bottom: 1px solid #a8c8ea; box-sizing: content-box; }
        .tr { height: 24px; display: flex; align-items: center; padding-left: 3px; }
        .tr .tt { margin: 2px 0 0 4px; color: #444; }
        .menu { margin-left: auto; display: flex; align-items: center; padding-right: 5px; color: #333; }
        .menu span { width: 52px; }
        .menu .ic { display: flex; align-items: center; justify-content: center; height: 22px; }
        .tb { display: flex; padding-left: 7px; gap: 0; }
        .tb .first { margin-right: 5px; }
        .ar { display: flex; align-items: center; height: 23px; margin-top: 3px; padding-left: 9px; }
        .input { height: 21px; background: #fff; border: 1px solid #a8c4e0; border-radius: 2px; display: flex; align-items: center; box-sizing: border-box; color: #333; }
        .main { flex: 1; display: flex; flex-direction: column; position: relative; background: #fff; }
        .hdr { height: 19px; display: grid; grid-template-columns: 371px 70px 70px 120px 120px; background: linear-gradient(#fafafa, #fff); flex: none; }
        .hdr span { padding-left: 5px; line-height: 18px; border-right: 1px solid #eee; }
        .row { display: flex; height: 21px; align-items: center; }
        .row .ic { width: 20px; flex: none; display: flex; justify-content: center; padding-left: 4px; box-sizing: border-box; }
        .cells { display: grid; grid-template-columns: 351px 70px 70px 120px 120px; height: 21px; line-height: 21px; }
        .cells span { padding-left: 2px; }
        .cells .r { text-align: right; padding-right: 6px; }
        .cells .l { padding-left: 6px; }
        .cells .dt { letter-spacing: .25px; }
        .sel { background: #0078d7; color: #fff; }
        .tip { position: absolute; left: 39px; top: -9px; width: 36px; height: 26px; background: #fff; border: 1px solid #888; box-shadow: 2px 2px 2px #aaa; box-sizing: border-box; text-align: center; line-height: 23px; color: #666; }
        .stat { height: 24px; flex: none; background: #e7edf4; border-top: 1px solid #d9e2ec; padding-left: 5px; line-height: 22px; color: #666; box-sizing: border-box; word-spacing: 1.200px; }
        .shield { position: absolute; left: 706px; top: 25px; width: 53px; height: 63px; }
        .shield span { position: absolute; left: 0; right: 0; top: 17px; padding-left: 2px; box-sizing: border-box; text-align: center; color: #fff; font-size: 15px; line-height: 22px; letter-spacing: 4px; font-weight: 400; }
      </style>
      <div class="top">
        <div class="tr">
          <app-icon name="zip"></app-icon><span class="tt">file.zip - 360压缩</span>
          <div class="menu">
            <span>文件</span><span>操作</span><span>工具</span><span style="width:43px">帮助</span>
            <div class="ic" style="width:28px"><app-icon name="zshirt"></app-icon></div>
            <div class="ic" style="width:40px"><app-icon name="zmsg"></app-icon></div>
            <div class="ic" style="width:28px;padding-top:8px"><app-icon name="zmin"></app-icon></div>
            <div class="ic" style="width:28px"><app-icon name="zmax"></app-icon></div>
            <div class="ic" style="width:28px;margin-left:7px"><app-icon name="zclose"></app-icon></div>
          </div>
        </div>
        <div class="tb">
          <zip-btn on class="first"><app-icon slot="g" name="zadd"></app-icon>添加</zip-btn>
          <zip-btn><app-icon slot="g" name="zext"></app-icon>解压到</zip-btn>
          <zip-btn><app-icon slot="g" name="zone"></app-icon>一键解压</zip-btn>
          <zip-btn><app-icon slot="g" name="ztrash"></app-icon>删除</zip-btn>
          <zip-btn><app-icon slot="g" name="zlang"></app-icon>压缩包语言</zip-btn>
        </div>
        <div class="ar">
          <app-icon name="zup"></app-icon>
          <app-icon name="zview1" style="margin-left:7px"></app-icon>
          <app-icon name="zview2" style="margin-left:8px"></app-icon>
          <div class="input" style="width:463px;margin-left:11px;padding-left:6px;gap:4px"><app-icon name="zip" w="16" h="14"></app-icon>file.zip - 解包大小为 1 KB<app-icon name="zv" style="margin-left:auto;margin-right:2px"></app-icon></div>
          <div class="input" style="width:21px;justify-content:center;background:#e4eef8"><span style="border:4px solid transparent;border-top:5px solid #5a7fa8;border-bottom:0"></span></div>
          <div class="input" style="width:193px;margin-left:5px;padding-left:3px;color:#555">搜索包内文件<app-icon name="zsearch" style="margin-left:auto;margin-right:3px"></app-icon></div>
        </div>
      </div>
      <div class="main">
        <div class="hdr"><span>名称</span><span>压缩前</span><span>压缩后</span><span>类型</span><span>修改日期</span></div>
        <div class="row"><div class="ic"><app-icon name="folder"></app-icon></div><div class="cells"><span>.. (上级目录)</span><span></span><span></span><span class="l">文件夹</span><span></span></div></div>
        <div class="row"><div class="ic"><app-icon name="txt"></app-icon></div><div class="cells sel"><span>flag.txt</span><span class="r">1 KB</span><span class="r">1 KB</span><span class="l">文本文档</span><span class="l dt">2021-03-15 19:51</span></div></div>
        <div class="tip">添加</div>
      </div>
      <div class="stat">大小: 1 KB 共 1 个文件 压缩率 113.3% 已经选择 1 KB (1 个文件)</div>
      <div class="shield"><app-icon name="shield"></app-icon><span>安全</span></div>`
  }
}

class DeskMark extends HTMLElement {
  constructor() {
    super()
    this.attachShadow({ mode: 'open' }).innerHTML = `
      <style>
        :host { position: absolute; left: 1082px; top: 986px; font: 16px/20px "Liberation Sans", sans-serif; color: rgba(190,190,190,.65); white-space: nowrap; pointer-events: none; }
      </style>
      https://blog.csdn.net/qq_51954912`
  }
}

customElements.define('app-icon', AppIcon)
customElements.define('bm-item', BmItem)
customElements.define('bookmark-bar', BookmarkBar)
customElements.define('ctf-card', CtfCard)
customElements.define('ctf-modal', CtfModal)
customElements.define('ctf-browser', CtfBrowser)
customElements.define('tool-btn', ToolBtn)
customElements.define('editor-window', EditorWindow)
customElements.define('file-item', FileItem)
customElements.define('rb-large', RbLarge)
customElements.define('rb-small', RbSmall)
customElements.define('rb-group', RbGroup)
customElements.define('explorer-window', ExplorerWindow)
customElements.define('zip-btn', ZipBtn)
customElements.define('zip-window', ZipWindow)
customElements.define('desk-mark', DeskMark)
</script>
</body>
</html>
